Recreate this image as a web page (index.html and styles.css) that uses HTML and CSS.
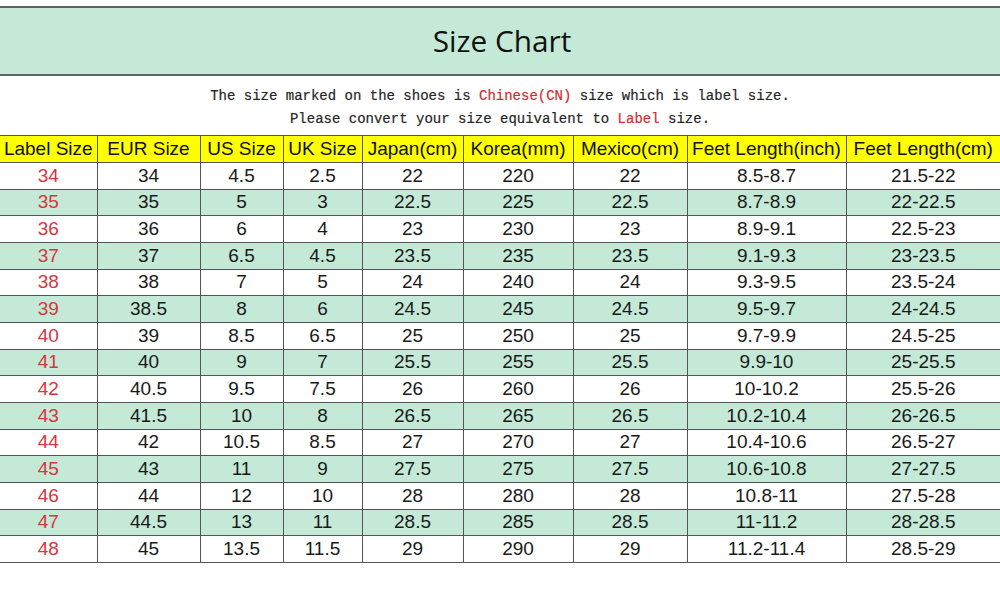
FILE: index.html
```html
<!DOCTYPE html>
<html>
<head>
<meta charset="utf-8">
<link rel="stylesheet" href="styles.css">
</head>
<body>
<div class="banner"><h1 class="title">Size Chart</h1></div>
<div class="note">
  <p>The size marked on the shoes is <span class="hl">Chinese(CN)</span> size which is label size.</p>
  <p>Please convert your size equivalent to <span class="hl">Label</span> size.</p>
</div>
<table class="chart">
  <colgroup>
    <col class="c1"><col class="c2"><col class="c3"><col class="c4"><col class="c5"><col class="c6"><col class="c7"><col class="c8"><col class="c9">
  </colgroup>
  <thead>
    <tr><th>Label Size</th><th>EUR Size</th><th>US Size</th><th>UK Size</th><th>Japan(cm)</th><th>Korea(mm)</th><th>Mexico(cm)</th><th>Feet Length(inch)</th><th>Feet Length(cm)</th></tr>
  </thead>
  <tbody>
    <tr><td>34</td><td>34</td><td>4.5</td><td>2.5</td><td>22</td><td>220</td><td>22</td><td>8.5-8.7</td><td>21.5-22</td></tr>
    <tr><td>35</td><td>35</td><td>5</td><td>3</td><td>22.5</td><td>225</td><td>22.5</td><td>8.7-8.9</td><td>22-22.5</td></tr>
    <tr><td>36</td><td>36</td><td>6</td><td>4</td><td>23</td><td>230</td><td>23</td><td>8.9-9.1</td><td>22.5-23</td></tr>
    <tr><td>37</td><td>37</td><td>6.5</td><td>4.5</td><td>23.5</td><td>235</td><td>23.5</td><td>9.1-9.3</td><td>23-23.5</td></tr>
    <tr><td>38</td><td>38</td><td>7</td><td>5</td><td>24</td><td>240</td><td>24</td><td>9.3-9.5</td><td>23.5-24</td></tr>
    <tr><td>39</td><td>38.5</td><td>8</td><td>6</td><td>24.5</td><td>245</td><td>24.5</td><td>9.5-9.7</td><td>24-24.5</td></tr>
    <tr><td>40</td><td>39</td><td>8.5</td><td>6.5</td><td>25</td><td>250</td><td>25</td><td>9.7-9.9</td><td>24.5-25</td></tr>
    <tr><td>41</td><td>40</td><td>9</td><td>7</td><td>25.5</td><td>255</td><td>25.5</td><td>9.9-10</td><td>25-25.5</td></tr>
    <tr><td>42</td><td>40.5</td><td>9.5</td><td>7.5</td><td>26</td><td>260</td><td>26</td><td>10-10.2</td><td>25.5-26</td></tr>
    <tr><td>43</td><td>41.5</td><td>10</td><td>8</td><td>26.5</td><td>265</td><td>26.5</td><td>10.2-10.4</td><td>26-26.5</td></tr>
    <tr><td>44</td><td>42</td><td>10.5</td><td>8.5</td><td>27</td><td>270</td><td>27</td><td>10.4-10.6</td><td>26.5-27</td></tr>
    <tr><td>45</td><td>43</td><td>11</td><td>9</td><td>27.5</td><td>275</td><td>27.5</td><td>10.6-10.8</td><td>27-27.5</td></tr>
    <tr><td>46</td><td>44</td><td>12</td><td>10</td><td>28</td><td>280</td><td>28</td><td>10.8-11</td><td>27.5-28</td></tr>
    <tr><td>47</td><td>44.5</td><td>13</td><td>11</td><td>28.5</td><td>285</td><td>28.5</td><td>11-11.2</td><td>28-28.5</td></tr>
    <tr><td>48</td><td>45</td><td>13.5</td><td>11.5</td><td>29</td><td>290</td><td>29</td><td>11.2-11.4</td><td>28.5-29</td></tr>
  </tbody>
</table>
</body>
</html>
```
FILE: styles.css
```css
html, body {
  margin: 0;
  padding: 0;
  background: #ffffff;
  width: 1000px;
  height: 600px;
  overflow: hidden;
}

.banner {
  margin-top: 6px;
  height: 66px;
  background: #c4e9d7;
  border-top: 2px solid #5d6461;
  border-bottom: 2px solid #5d6461;
  display: flex;
  align-items: center;
  justify-content: center;
}

.title {
  margin: 0;
  font-family: "Open Sans", "Noto Sans", sans-serif;
  font-weight: 400;
  font-size: 29.8px;
  color: #111;
  line-height: 1;
  padding-left: 4px;
}

.note {
  padding: 9px 0 4px;
  font-family: "Liberation Mono", "DejaVu Sans Mono", monospace;
  font-size: 14px;
  color: #262626;
  text-align: center;
  -webkit-text-stroke: 0.2px #262626;
}

.note p {
  margin: 0;
  line-height: 23px;
}

.hl {
  color: #d32b2f;
  -webkit-text-stroke: 0.2px #d32b2f;
}

.chart {
  width: 1000px;
  table-layout: fixed;
  border-collapse: collapse;
  font-family: "Liberation Sans", Arial, sans-serif;
  font-size: 19px;
  color: #1a1a1a;
}

.c1 { width: 97px; }
.c2 { width: 103px; }
.c3 { width: 83px; }
.c4 { width: 79px; }
.c5 { width: 101px; }
.c6 { width: 110px; }
.c7 { width: 114px; }
.c8 { width: 159px; }
.c9 { width: 154px; }

.chart th, .chart td {
  padding: 0;
  text-align: center;
  white-space: nowrap;
  border: 1px solid #555;
  line-height: 20px;
}

.chart th:first-child, .chart td:first-child { border-left: none; }
.chart th:last-child, .chart td:last-child { border-right: none; }

.chart th {
  font-weight: 400;
  background: #ffff00;
  color: #111;
  height: 26px;
}

.chart td {
  height: 25.67px;
}

.chart tbody tr:nth-child(even) td {
  background: #c4e9d7;
}

.chart td:first-child {
  color: #d8363d;
}
```
